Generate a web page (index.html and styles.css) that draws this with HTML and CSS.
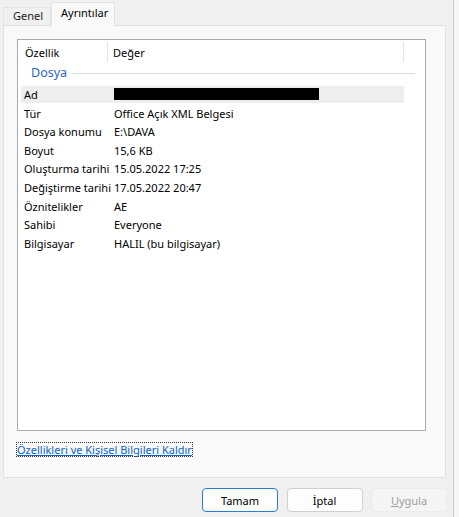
FILE: index.html
```html
<!DOCTYPE html>
<html lang="tr">
<head>
    <meta charset="UTF-8">
    <meta name="viewport" content="width=device-width, initial-scale=1.0">
    <title>Özellikler</title>
    <link rel="stylesheet" href="styles.css">
</head>
<body>
    <div class="window">
        <div class="dialog">
            <div class="tabs">
                <div class="tab">Genel</div>
                <div class="tab active">Ayrıntılar</div>
            </div>

            <div class="panel">
                <div class="list">
                    <div class="list-head">
                        <div class="col-name">Özellik</div>
                        <div class="col-value">Değer</div>
                        <div class="col-rest"></div>
                    </div>

                    <div class="group">
                        <span>Dosya</span>
                        <div class="group-line"></div>
                    </div>

                    <div class="row selected">
                        <div class="row-name">Ad</div>
                        <div class="row-value"><span class="redacted"></span></div>
                    </div>
                    <div class="row">
                        <div class="row-name">Tür</div>
                        <div class="row-value">Office Açık XML Belgesi</div>
                    </div>
                    <div class="row">
                        <div class="row-name">Dosya konumu</div>
                        <div class="row-value">E:\DAVA</div>
                    </div>
                    <div class="row">
                        <div class="row-name">Boyut</div>
                        <div class="row-value">15,6 KB</div>
                    </div>
                    <div class="row">
                        <div class="row-name">Oluşturma tarihi</div>
                        <div class="row-value">15.05.2022 17:25</div>
                    </div>
                    <div class="row">
                        <div class="row-name">Değiştirme tarihi</div>
                        <div class="row-value">17.05.2022 20:47</div>
                    </div>
                    <div class="row">
                        <div class="row-name">Öznitelikler</div>
                        <div class="row-value">AE</div>
                    </div>
                    <div class="row">
                        <div class="row-name">Sahibi</div>
                        <div class="row-value">Everyone</div>
                    </div>
                    <div class="row">
                        <div class="row-name">Bilgisayar</div>
                        <div class="row-value">HALIL (bu bilgisayar)</div>
                    </div>
                </div>

                <a href="#" class="remove-link">Özellikleri ve Kişisel Bilgileri Kaldır</a>
            </div>

            <div class="buttons">
                <button class="btn default">Tamam</button>
                <button class="btn">İptal</button>
                <button class="btn" disabled><u>U</u>ygula</button>
            </div>
        </div>
        <div class="edge"></div>
    </div>
</body>
</html>
```

FILE: styles.css
```css
body {
    margin: 0;
    background-color: #f3f3f3;
    font-family: "Segoe UI", "Noto Sans", sans-serif;
    font-size: 11px;
    color: #000;
}
.window {
    display: flex;
    height: 517px;
}
.dialog {
    width: 453px;
    background-color: #f0f0f0;
    border-right: 1px solid #c9c9c9;
}
.edge {
    flex: 1;
    background-color: #f7f7f7;
}

/* tab strip */
.tabs {
    display: flex;
    align-items: flex-end;
    height: 25px;
    padding-left: 3px;
}
.tab {
    box-sizing: border-box;
    height: 18px;
    width: 48px;
    padding-left: 9px;
    line-height: 16px;
    background-color: #f0f0f0;
    border: 1px solid #e4e4e4;
    border-bottom: none;
    color: #1a1a1a;
}
.tab.active {
    position: relative;
    top: 1px;
    height: 24px;
    width: 64px;
    padding-left: 9px;
    line-height: 20px;
    background-color: #f9f9f9;
    border-color: #e2e2e2;
    color: #000;
}

/* tab page */
.panel {
    box-sizing: border-box;
    width: 443px;
    height: 453px;
    margin-left: 3px;
    padding: 13px 0 0 13px;
    background-color: #f9f9f9;
    border: 1px solid #e2e2e2;
}
.list {
    box-sizing: border-box;
    width: 409px;
    height: 392px;
    background: white;
    border: 1px solid #a9adb2;
}
.list-head {
    display: flex;
    height: 23px;
}
.col-name {
    width: 90px;
    padding-left: 7px;
    box-sizing: border-box;
    border-right: 1px solid #e5e5e5;
    margin: 2px 0 1px;
    line-height: 21px;
}
.col-value {
    width: 296px;
    padding-left: 5px;
    box-sizing: border-box;
    border-right: 1px solid #e5e5e5;
    margin: 2px 0 1px;
    line-height: 21px;
}

.group {
    display: flex;
    align-items: center;
    height: 23px;
    padding: 0 10px 0 13px;
    color: #2b63c9;
    font-size: 12.5px;
}
.group span {
    position: relative;
    top: -2px;
}
.group-line {
    flex: 1;
    height: 1px;
    margin: 0 0 3px 5px;
    background-color: #d8e1e9;
}

.row {
    display: flex;
    width: 383px;
    height: 17px;
    line-height: 17px;
    margin: 0 0 1.6px 3px;
    white-space: nowrap;
}
.row.selected {
    background-color: #eeeeee;
}
.row-name {
    width: 93px;
    padding-left: 3px;
    box-sizing: border-box;
}
.redacted {
    display: inline-block;
    width: 205px;
    height: 12px;
    margin-top: 2px;
    background: black;
    vertical-align: top;
}

.remove-link {
    display: inline-block;
    margin-top: 12px;
    line-height: 13px;
    color: #0a63c9;
    text-decoration: underline;
    outline: 1px dotted #333;
}

/* dialog buttons */
.buttons {
    display: flex;
    justify-content: flex-end;
    gap: 8.5px;
    padding: 10px 6px 0 0;
}
.btn {
    box-sizing: border-box;
    width: 76px;
    height: 24px;
    font-family: inherit;
    font-size: 11px;
    color: #000;
    background-color: #fdfdfd;
    border: 1px solid #d0d0d0;
    border-radius: 4px;
    padding: 0;
}
.btn.default {
    border-color: #2f7bd0;
}
.btn:disabled {
    background-color: #f5f5f5;
    border-color: #ececec;
    color: #9e9e9e;
}
```
